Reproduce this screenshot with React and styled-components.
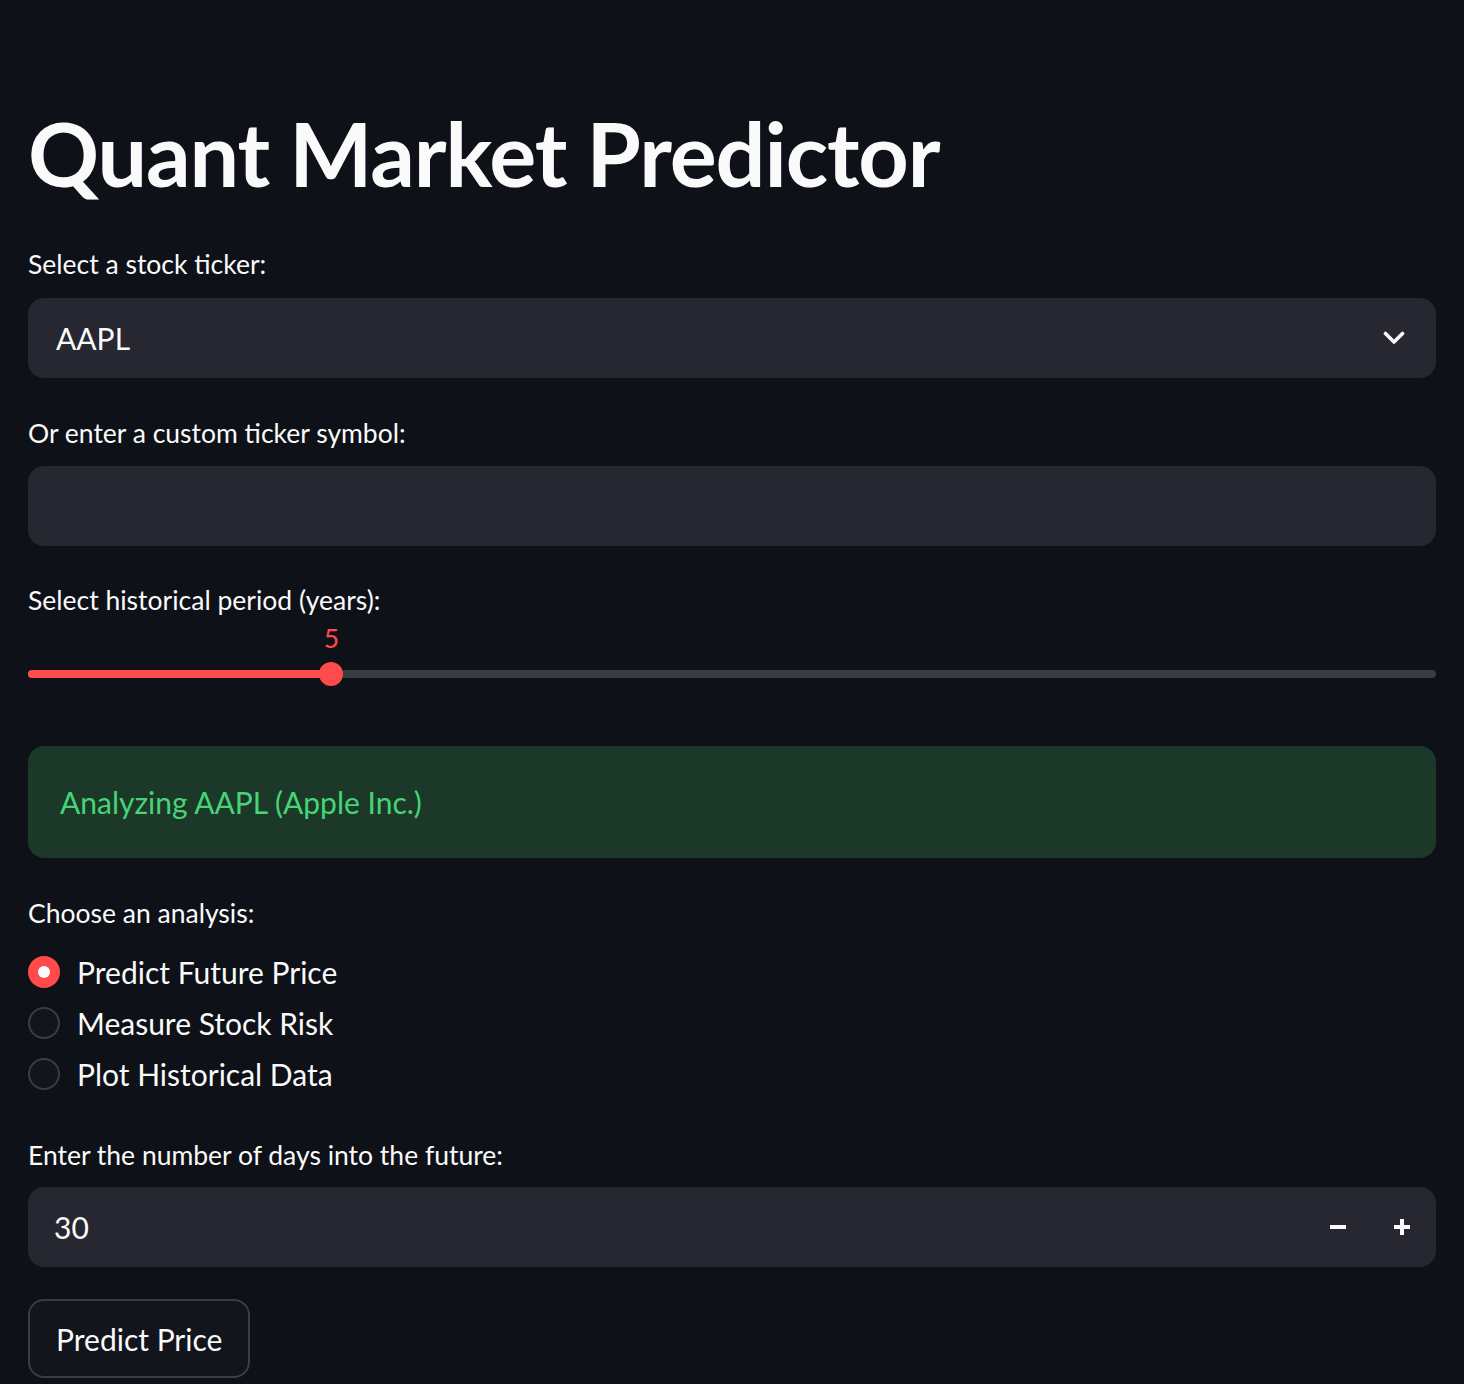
import React, { useState } from "react";
import styled, { createGlobalStyle } from "styled-components";

const Global = createGlobalStyle`
  html, body { margin: 0; padding: 0; background: #0e1117; }
  body { min-height: 100vh; font-family: "Lato", "Noto Sans", sans-serif; color: #fafafa; }
  * { box-sizing: border-box; }
`;

const Page = styled.main`
  display: flex;
  flex-direction: column;
  padding: 101px 28px 6px 28px;
`;

const Title = styled.h1`
  margin: 0;
  height: 106px;
  display: flex;
  align-items: center;
  font-size: 88px;
  font-weight: 700;
  line-height: 1.2;
  color: #fafafa;
  letter-spacing: -1.1px;
`;

const Label = styled.div`
  height: 44px;
  margin-top: ${(p) => p.$mt}px;
  display: flex;
  align-items: center;
  font-size: 26.5px;
  color: #fafafa;
`;

const Field = styled.div`
  height: 80px;
  margin-top: ${(p) => p.$mt || 12}px;
  background: #262730;
  border-radius: 16px;
  display: flex;
  align-items: center;
  padding: 0 ${(p) => p.$pr || 28}px 0 ${(p) => p.$pl || 28}px;
  font-size: 30px;
  color: #fafafa;
`;

const FieldText = styled.span`
  flex: 1;
`;

const Chevron = () => (
  <svg width="22" height="14" viewBox="0 0 22 14" fill="none">
    <path d="M2.5 2.5 L11 11 L19.5 2.5" stroke="#fafafa" strokeWidth="3.6" strokeLinecap="round" strokeLinejoin="round" />
  </svg>
);

const StepButton = styled.button`
  width: 64px;
  height: 80px;
  border: none;
  background: transparent;
  display: flex;
  align-items: center;
  justify-content: center;
  padding: 0;
  cursor: pointer;
`;

const SliderWrap = styled.div`
  position: relative;
  height: 90px;
`;

const Track = styled.div`
  position: absolute;
  left: 0;
  right: 0;
  top: 48px;
  height: 8px;
  border-radius: 4px;
  background: #3b3d45;
`;

const Fill = styled.div`
  position: absolute;
  left: 0;
  top: 0;
  bottom: 0;
  border-radius: 4px;
  background: #ff4b4b;
`;

const Thumb = styled.div`
  position: absolute;
  top: 40px;
  width: 24px;
  height: 24px;
  margin-left: -12px;
  border-radius: 50%;
  background: #ff4b4b;
`;

const ThumbValue = styled.div`
  position: absolute;
  top: 2px;
  transform: translateX(-50%);
  font-size: 26.5px;
  line-height: 28px;
  color: #ff4b4b;
`;

const Success = styled.div`
  margin-top: 34px;
  height: 112px;
  border-radius: 16px;
  background: #1c3829;
  color: #46d476;
  display: flex;
  align-items: center;
  padding: 0 32px;
  font-size: 30px;
`;

const RadioGroup = styled.div`
  display: flex;
  flex-direction: column;
  margin-top: 11px;
`;

const RadioRow = styled.label`
  height: 51px;
  display: flex;
  align-items: center;
  gap: 17px;
  font-size: 30px;
  color: #fafafa;
  cursor: pointer;
`;

const RadioDot = styled.span`
  width: 32px;
  height: 32px;
  border-radius: 50%;
  flex-shrink: 0;
  display: flex;
  align-items: center;
  justify-content: center;
  background: ${(p) => (p.$on ? "#ff4b4b" : "#12151c")};
  border: ${(p) => (p.$on ? "none" : "2px solid #3a3d46")};
  &::after {
    content: "";
    display: ${(p) => (p.$on ? "block" : "none")};
    width: 12px;
    height: 12px;
    border-radius: 50%;
    background: #fafafa;
  }
`;

const Button = styled.button`
  margin-top: 32px;
  align-self: flex-start;
  height: 79px;
  padding: 0 26px;
  border-radius: 16px;
  border: 2px solid #3a3d46;
  background: #12151c;
  color: #fafafa;
  font-family: inherit;
  font-size: 30px;
  cursor: pointer;
`;

const MIN = 1;
const MAX = 20;

export default function App() {
  const [choice, setChoice] = useState(0);
  const [days, setDays] = useState(30);
  const years = 5;
  const pct = (years - MIN) / (MAX - MIN);
  const pos = `calc(${pct} * (100% - 24px) + 12px)`;
  const options = ["Predict Future Price", "Measure Stock Risk", "Plot Historical Data"];

  return (
    <>
      <Global />
      <Page>
        <Title>Quant Market Predictor</Title>

        <Label $mt={35}>Select a stock ticker:</Label>
        <Field $pr={31}>
          <FieldText>AAPL</FieldText>
          <Chevron />
        </Field>

        <Label $mt={33}>Or enter a custom ticker symbol:</Label>
        <Field $mt={11} />

        <Label $mt={32}>Select historical period (years):</Label>
        <SliderWrap>
          <ThumbValue style={{ left: pos }}>{years}</ThumbValue>
          <Track>
            <Fill style={{ width: pos }} />
          </Track>
          <Thumb style={{ left: pos }} />
        </SliderWrap>

        <Success>Analyzing AAPL (Apple Inc.)</Success>

        <Label $mt={33}>Choose an analysis:</Label>
        <RadioGroup>
          {options.map((o, i) => (
            <RadioRow key={o} onClick={() => setChoice(i)}>
              <RadioDot $on={choice === i} />
              {o}
            </RadioRow>
          ))}
        </RadioGroup>

        <Label $mt={34}>Enter the number of days into the future:</Label>
        <Field $mt={10} $pl={26} $pr={2}>
          <FieldText>{days}</FieldText>
          <StepButton onClick={() => setDays((d) => d - 1)} aria-label="minus">
            <svg width="16" height="16" viewBox="0 0 16 16">
              <rect x="0" y="6" width="16" height="4" fill="#fafafa" />
            </svg>
          </StepButton>
          <StepButton onClick={() => setDays((d) => d + 1)} aria-label="plus">
            <svg width="16" height="16" viewBox="0 0 16 16">
              <rect x="0" y="6" width="16" height="4" fill="#fafafa" />
              <rect x="6" y="0" width="4" height="16" fill="#fafafa" />
            </svg>
          </StepButton>
        </Field>

        <Button>Predict Price</Button>
      </Page>
    </>
  );
}
